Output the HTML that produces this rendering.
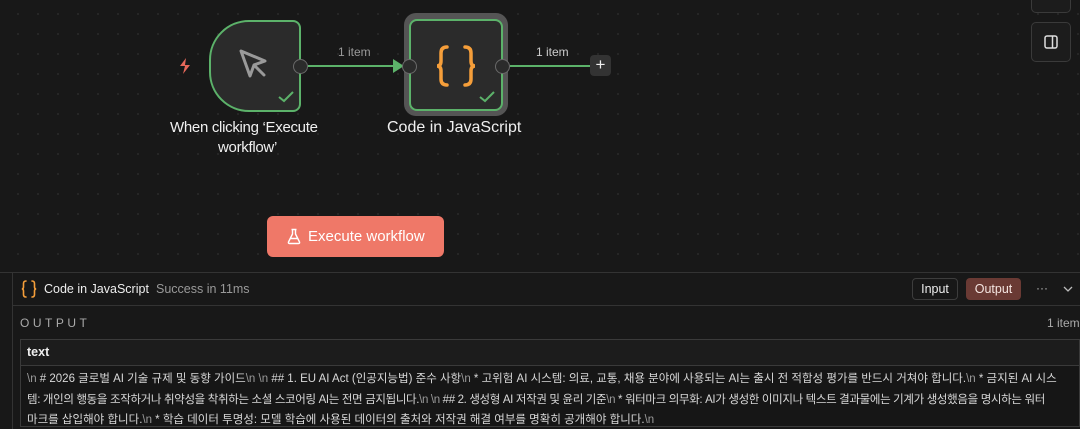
<!DOCTYPE html>
<html><head><meta charset="utf-8"><style>
*{margin:0;padding:0;box-sizing:border-box}
body{width:1080px;height:428px;overflow:hidden;background:#181818;font-family:"Liberation Sans","Noto Sans CJK KR",sans-serif;position:relative;color:#e6e6e6}
.canvas{position:absolute;left:0;top:0;width:1080px;height:272px;background-color:#181818;background-image:radial-gradient(#303030 0.7px,transparent 1px);background-size:20px 20px;background-position:8px 4px}
.abs{position:absolute}
.handle{position:absolute;width:15px;height:15px;border-radius:50%;background:#2b2b2b;border:1.5px solid #6a6a6a}
.lbl{position:absolute;color:#f0f0f0;font-size:14px;line-height:20px;white-space:nowrap}
.small{position:absolute;color:#9a9a9a;font-size:12px}
.panel{position:absolute;left:0;top:272px;width:1080px;height:156px;background:#181818;border-top:1px solid #333}
.n{color:#9a9a9a}
.txt div{white-space:nowrap;height:20.5px}
</style></head><body>
<div class="canvas"></div>
<div class="abs" style="left:1031px;top:-10px;width:40px;height:23px;border:1px solid #3a3a3a;border-radius:5px;background:#1c1c1c"></div>
<div class="abs" style="left:1031px;top:22px;width:40px;height:40px;border:1px solid #3a3a3a;border-radius:5px;background:#1c1c1c"></div>
<svg class="abs" style="left:1044px;top:35px" width="14" height="14" viewBox="0 0 14 14"><rect x="1" y="1" width="12" height="12" rx="2" fill="none" stroke="#ddd" stroke-width="1.5"/><line x1="8.5" y1="1" x2="8.5" y2="13" stroke="#ddd" stroke-width="1.5"/></svg>

<svg class="abs" style="left:177px;top:57px" width="16" height="18" viewBox="0 0 16 18"><path d="M9 1 L3 9 H8 L6 17 L13 8 H8 Z" fill="#e8685a"/></svg>
<div class="abs" style="left:209px;top:20px;width:92px;height:92px;background:#2b2b2b;border:2px solid #5cb26a;border-radius:40px 8px 8px 40px"></div>
<svg class="abs" style="left:236px;top:46px" width="36" height="36" viewBox="0 0 36 36"><path d="M5 5 L14 30 L18 19 L29 15 Z M18 19 L28 29" fill="none" stroke="#9a9a9a" stroke-width="3" stroke-linejoin="round" stroke-linecap="round"/></svg>
<svg class="abs" style="left:278px;top:90px" width="16" height="13" viewBox="0 0 16 13"><path d="M1 7 L6 11 L15 2" fill="none" stroke="#5cb26a" stroke-width="2"/></svg>
<div class="handle" style="left:293px;top:59px"></div>
<div class="abs" style="left:308px;top:65px;width:88px;height:2px;background:#5cb26a"></div>
<svg class="abs" style="left:393px;top:59px" width="12" height="14"><path d="M0 0 L11 7 L0 14 Z" fill="#5cb26a"/></svg>
<div class="small" style="left:338px;top:45px">1 item</div>
<div class="abs" style="left:404px;top:13px;width:104px;height:103px;background:#555;border-radius:12px"></div>
<div class="abs" style="left:409px;top:19px;width:94px;height:92px;background:#2b2b2b;border:2px solid #5cb26a;border-radius:8px"></div>
<svg class="abs" style="left:436px;top:45px" width="40" height="42" viewBox="0 0 40 42"><path d="M11 2 Q5 2 5 8 V16 Q5 21 1 21 Q5 21 5 26 V34 Q5 40 11 40 M29 2 Q35 2 35 8 V16 Q35 21 39 21 Q35 21 35 26 V34 Q35 40 29 40" fill="none" stroke="#f59e3a" stroke-width="3.5" stroke-linecap="round"/></svg>
<svg class="abs" style="left:479px;top:90px" width="16" height="13" viewBox="0 0 16 13"><path d="M1 7 L6 11 L15 2" fill="none" stroke="#5cb26a" stroke-width="2"/></svg>
<div class="handle" style="left:402px;top:59px"></div>
<div class="handle" style="left:495px;top:59px"></div>
<div class="abs" style="left:510px;top:65px;width:80px;height:2px;background:#5cb26a"></div>
<div class="small" style="left:536px;top:45px;color:#ccc">1 item</div>
<div class="abs" style="left:590px;top:55px;width:21px;height:21px;background:#333;border-radius:4px;color:#eee;font-size:17px;line-height:20px;text-align:center">+</div>
<div class="lbl" style="left:170px;top:118px;font-size:15px;letter-spacing:-0.3px">When clicking ‘Execute</div>
<div class="lbl" style="left:218px;top:138px;font-size:15px;letter-spacing:-0.3px">workflow’</div>
<div class="lbl" style="left:387px;top:118px;font-size:16px">Code in JavaScript</div>
<div class="abs" style="left:267px;top:216px;width:177px;height:41px;background:#ef7868;border-radius:6px;color:#fff;font-size:15px;line-height:41px">
<svg style="position:absolute;left:20px;top:12px" width="14" height="17" viewBox="0 0 14 17"><path d="M4.5 1.5 H9.5 M5.5 1.5 V6 L1.5 14 Q1 15.5 2.5 15.5 H11.5 Q13 15.5 12.5 14 L8.5 6 V1.5 M3.5 10.5 H10.5" fill="none" stroke="#fff" stroke-width="1.4" stroke-linejoin="round"/></svg>
<span style="position:absolute;left:41px">Execute workflow</span></div>

<div class="panel">
<div class="abs" style="left:12px;top:0;width:1px;height:156px;background:#333"></div>
<div class="abs" style="left:12px;top:32px;width:1068px;height:1px;background:#333"></div>
<svg class="abs" style="left:21px;top:7px" width="16" height="18" viewBox="0 0 16 18"><path d="M5 1 Q2.5 1 2.5 3.5 V7 Q2.5 9 0.8 9 Q2.5 9 2.5 11 V14.5 Q2.5 17 5 17 M11 1 Q13.5 1 13.5 3.5 V7 Q13.5 9 15.2 9 Q13.5 9 13.5 11 V14.5 Q13.5 17 11 17" fill="none" stroke="#f59e3a" stroke-width="1.6" stroke-linecap="round"/></svg>
<div class="abs" style="left:44px;top:9px;font-size:12.5px;color:#eee">Code in JavaScript</div>
<div class="abs" style="left:156px;top:9px;font-size:12.5px;color:#999">Success in 11ms</div>
<div class="abs" style="left:912px;top:5px;width:46px;height:22px;border:1px solid #3d3d3d;border-radius:4px;font-size:12.5px;line-height:20px;text-align:center;color:#eee">Input</div>
<div class="abs" style="left:966px;top:5px;width:55px;height:22px;background:#6a3a34;border-radius:4px;font-size:12.5px;line-height:22px;text-align:center;color:#f4e4e0">Output</div>
<div class="abs" style="left:1036px;top:8px;color:#bbb;font-size:12px">···</div>
<svg class="abs" style="left:1063px;top:13px" width="10" height="7"><path d="M1 1 L5 5 L9 1" fill="none" stroke="#bbb" stroke-width="1.3"/></svg>
<div class="abs" style="left:20px;top:43px;color:#aaa;font-size:12px;letter-spacing:3.5px">OUTPUT</div>
<div class="abs" style="left:1047px;top:43px;color:#aaa;font-size:12px">1 item</div>
<div class="abs" style="left:20px;top:66px;width:1060px;height:88px;border:1px solid #3a3a3a;background:#161616;overflow:hidden">
<div style="height:26px;border-bottom:1px solid #3a3a3a;background:#1c1c1c;font-size:12.5px;font-weight:bold;color:#eee;padding:5px 0 0 6px">text</div>
<div class="txt" style="padding:3px 0 0 6px;font-size:11.5px;line-height:20.5px;color:#d8d8d8">
<div><span class="n">\n</span> # 2026 글로벌 AI 기술 규제 및 동향 가이드<span class="n">\n</span> <span class="n">\n</span> ## 1. EU AI Act (인공지능법) 준수 사항<span class="n">\n</span> * 고위험 AI 시스템: 의료, 교통, 채용 분야에 사용되는 AI는 출시 전 적합성 평가를 반드시 거쳐야 합니다.<span class="n">\n</span> * 금지된 AI 시스</div>
<div style="letter-spacing:-0.35px">템: 개인의 행동을 조작하거나 취약성을 착취하는 소셜 스코어링 AI는 전면 금지됩니다.<span class="n">\n</span> <span class="n">\n</span> ## 2. 생성형 AI 저작권 및 윤리 기준<span class="n">\n</span> * 워터마크 의무화: AI가 생성한 이미지나 텍스트 결과물에는 기계가 생성했음을 명시하는 워터</div>
<div>마크를 삽입해야 합니다.<span class="n">\n</span> * 학습 데이터 투명성: 모델 학습에 사용된 데이터의 출처와 저작권 해결 여부를 명확히 공개해야 합니다.<span class="n">\n</span></div>
</div>
</div>
</div>
</body></html>
